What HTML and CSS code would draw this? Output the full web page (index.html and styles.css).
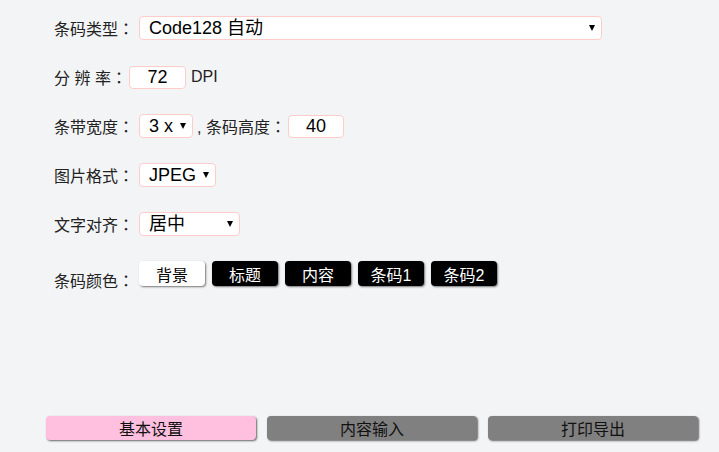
FILE: index.html
```html
<!DOCTYPE html>
<html>
<head>
  <meta charset="UTF-8">
  <title>条码设置</title>
  <link rel="stylesheet" href="styles.css">
</head>
<body>
  <div class="page">
    <div class="form">
      <div class="row">
        <span class="label">条码类型<span class="colon">：</span></span>
        <span class="pick wide">
          <select><option>Code128 自动</option></select>
        </span>
      </div>

      <div class="row">
        <span class="label">分 辨 率<span class="colon">：</span></span>
        <input class="num dpi" type="text" value="72">
        <span class="unit">DPI</span>
      </div>

      <div class="row">
        <span class="label">条带宽度<span class="colon">：</span></span>
        <span class="pick bar">
          <select><option>3 x</option></select>
        </span>
        <span class="label sep">, 条码高度<span class="colon">：</span></span>
        <input class="num" type="text" value="40">
      </div>

      <div class="row">
        <span class="label">图片格式<span class="colon">：</span></span>
        <span class="pick fmt">
          <select><option>JPEG</option></select>
        </span>
      </div>

      <div class="row">
        <span class="label">文字对齐<span class="colon">：</span></span>
        <span class="pick align">
          <select><option>居中</option></select>
        </span>
      </div>

      <div class="row colors">
        <span class="label">条码颜色<span class="colon">：</span></span>
        <button class="swatch light">背景</button>
        <button class="swatch">标题</button>
        <button class="swatch">内容</button>
        <button class="swatch">条码1</button>
        <button class="swatch">条码2</button>
      </div>
    </div>

    <div class="tabs">
      <button class="tab active">基本设置</button>
      <button class="tab">内容输入</button>
      <button class="tab">打印导出</button>
    </div>
  </div>
</body>
</html>
```

FILE: styles.css
```css
body {
  margin: 0;
  background: #f3f4f6;
  color: #222;
  font-family: "Liberation Sans", "Noto Sans CJK SC", sans-serif;
}
.page {
  height: 452px;
  display: flex;
  flex-direction: column;
}
.form {
  flex: 1;
  padding: 16px 0 0 54px;
  display: flex;
  flex-direction: column;
  gap: 25px;
}
.row {
  display: flex;
  align-items: center;
  height: 24px;
}
.label {
  font-size: 16px;
  color: #222;
  white-space: pre;
}
.colon {
  font-family: "Noto Sans CJK JP", sans-serif;
}
.sep {
  margin: 0 2px 0 4px;
}
.pick {
  position: relative;
  display: inline-block;
  height: 24px;
  margin-left: 5px;
}
.pick select {
  appearance: none;
  -webkit-appearance: none;
  width: 100%;
  height: 24px;
  box-sizing: border-box;
  border: 1px solid #fcc;
  border-radius: 4px;
  background: #fff;
  padding: 0 0 0 9px;
  font-family: "Liberation Sans", "Noto Sans CJK SC", sans-serif;
  font-size: 18px;
  color: #000;
}
.pick::after {
  content: "";
  position: absolute;
  right: 7px;
  top: 9px;
  border-left: 3px solid transparent;
  border-right: 3px solid transparent;
  border-top: 6px solid #000;
}
.wide { width: 463px; }
.bar { width: 54px; }
.fmt { width: 77px; }
.align { width: 101px; }
.num {
  width: 56px;
  height: 23px;
  box-sizing: border-box;
  border: 1px solid #fcc;
  border-radius: 4px;
  background: #fff;
  text-align: center;
  font-family: "Liberation Sans", sans-serif;
  font-size: 18px;
  color: #000;
  padding: 0;
}
.dpi {
  margin-left: 2px;
  width: 57px;
}
.unit {
  font-size: 16px;
  margin-left: 5px;
}
.colors {
  align-items: flex-end;
  height: 25px;
}
.colors .label {
  margin-bottom: -6px;
  margin-right: 5px;
}
.swatch {
  width: 66px;
  height: 25px;
  margin-right: 7px;
  border: none;
  border-radius: 4px;
  background: #000;
  color: #fff;
  font-family: "Liberation Sans", "Noto Sans CJK SC", sans-serif;
  font-size: 16px;
  padding: 0;
  box-shadow: 1px 1px 2px #777;
}
.swatch.light {
  background: #fff;
  color: #000;
}
.tabs {
  display: flex;
  gap: 11px;
  padding: 0 0 12px 46px;
}
.tab {
  width: 210px;
  height: 24px;
  border: none;
  border-radius: 4px;
  background: #808080;
  color: #111;
  font-family: "Liberation Sans", "Noto Sans CJK SC", sans-serif;
  font-size: 16px;
  padding: 0;
  box-shadow: 1px 1px 2px #666;
}
.tab.active {
  background: #ffc0e0;
}
```
